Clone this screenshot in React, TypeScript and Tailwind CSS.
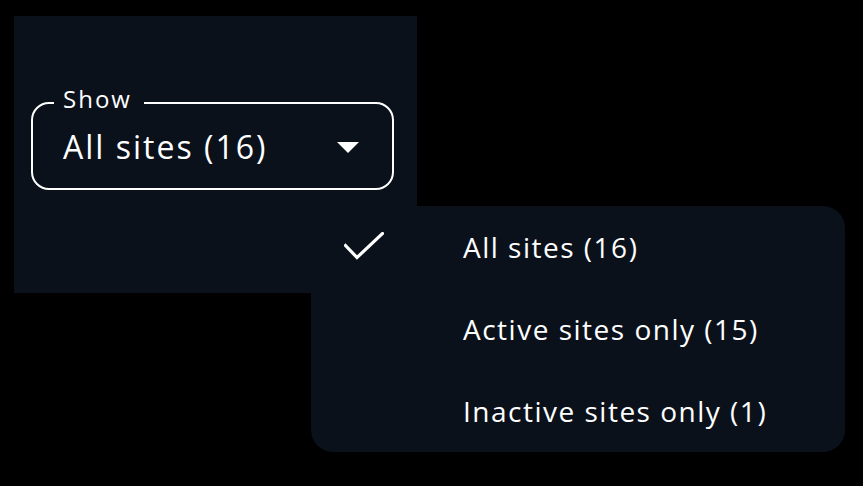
import React from 'react';

const options = [
  { label: 'All sites (16)', selected: true },
  { label: 'Active sites only (15)', selected: false },
  { label: 'Inactive sites only (1)', selected: false },
];

const CheckIcon = () => (
  <svg width="40" height="30" viewBox="0 0 40 30" fill="none">
    <path d="M1.5 13.5 L13 25.5 L38.5 1.5" stroke="white" strokeWidth="3.2" strokeLinecap="square" />
  </svg>
);

const App = () => {
  return (
    <div className="relative min-h-screen w-full bg-black text-white" style={{ fontFamily: '"Open Sans", "Noto Sans", sans-serif' }}>
      <div className="pt-[16px] pl-[14px]">
        {/* Panel with select */}
        <div className="w-[403px] h-[277px] bg-[#0a111b] pt-[71px] pl-[17px]">
          <fieldset className="w-[363px] border-2 border-white rounded-[18px] pl-[21px] pr-[33px] pb-[13px]">
            <legend className="pl-[9px] pr-[12px] pb-[8px] text-[24px] leading-[24px] tracking-[2px]">Show</legend>
            <div className="flex items-center justify-between pl-[9px] h-[56px]">
              <span className="text-[32px] leading-none tracking-[2px]">All sites (16)</span>
              <svg width="22" height="11" viewBox="0 0 22 11">
                <path d="M0 0 L22 0 L11 11 Z" fill="white" />
              </svg>
            </div>
          </fieldset>
        </div>
      </div>

      {/* Dropdown menu */}
      <div className="absolute left-[311px] top-[206px] w-[534px] bg-[#0a111b] rounded-[22px]">
        {options.map((o) => (
          <div key={o.label} className="flex items-center h-[82px]">
            <div className="w-[152px] pl-[33px] flex items-center">
              {o.selected && <CheckIcon />}
            </div>
            <span className="text-[28px] tracking-[1.5px]">{o.label}</span>
          </div>
        ))}
      </div>
    </div>
  );
};

export default App;
